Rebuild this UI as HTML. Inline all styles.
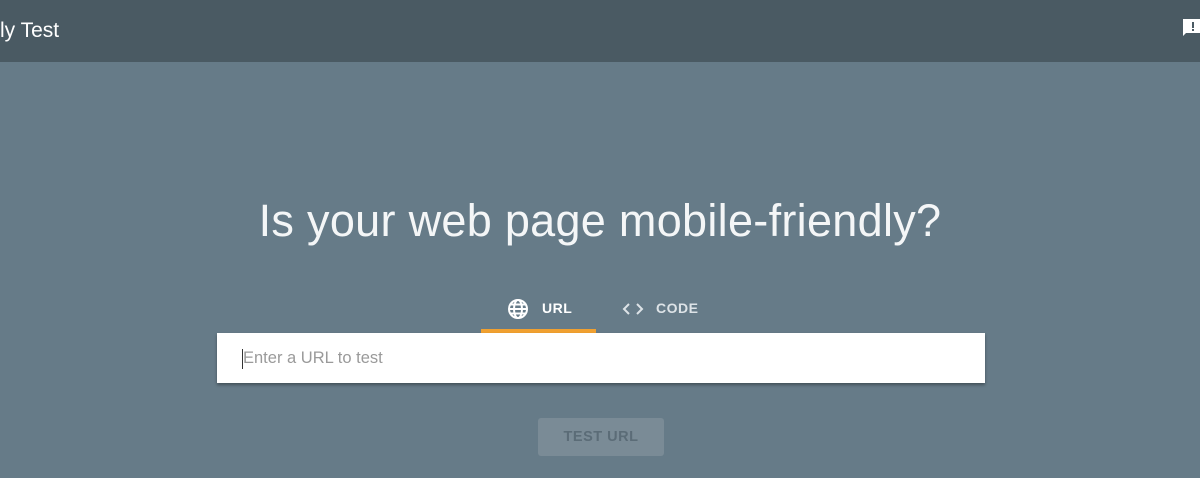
<!DOCTYPE html>
<html><head><meta charset="utf-8"><style>
html,body{margin:0;padding:0;width:1200px;height:478px;overflow:hidden;background:#667b88;font-family:"Liberation Sans",sans-serif;}
.hdr{position:absolute;left:0;top:0;width:1200px;height:62px;background:#4a5a63;}
.hdr .t{position:absolute;left:0;top:19px;font-size:21px;color:#fff;}
.fb{position:absolute;left:1183px;top:19px;width:20px;height:18px;}
h1{position:absolute;left:0;width:1200px;top:195px;margin:0;text-align:center;font-weight:normal;font-size:45px;color:#f4f6f7;letter-spacing:0.3px;}
.tab{position:absolute;top:300px;font-size:14px;font-weight:bold;letter-spacing:0.5px;}
.ul{position:absolute;left:481px;top:329px;width:115px;height:4px;background:#f0a030;}
.box{position:absolute;left:217px;top:333px;width:768px;height:50px;background:#fff;box-shadow:0 2px 3px rgba(0,0,0,.35);}
.box .ph{position:absolute;left:26px;top:16px;font-size:16.5px;color:#9a9a9a;}
.box .cur{position:absolute;left:25px;top:16px;width:1px;height:20px;background:#333;}
.btn{position:absolute;left:538px;top:418px;width:126px;height:38px;background:#7a8b96;border-radius:3px;color:#5b6c77;font-size:14.5px;font-weight:bold;text-align:center;line-height:38px;letter-spacing:0.5px;}
</style></head><body>
<div class="hdr"><div class="t">ly Test</div>
<svg class="fb" viewBox="0 0 20 18"><path d="M0 0H20V14H3L0 17Z" fill="#fff"/><rect x="9" y="3" width="2" height="6" fill="#4a5a63"/><rect x="9" y="10" width="2" height="2" fill="#4a5a63"/></svg></div>
<h1>Is your web page mobile-friendly?</h1>
<svg style="position:absolute;left:507px;top:298px" width="22" height="22" viewBox="0 0 22 22" fill="none" stroke="#fff" stroke-width="2"><circle cx="11" cy="11" r="9"/><ellipse cx="11" cy="11" rx="4" ry="9"/><path d="M2 11H20M3.5 6.5H18.5M3.5 15.5H18.5"/></svg>
<div class="tab" style="left:542px;color:#fff">URL</div>
<svg style="position:absolute;left:622px;top:301px" width="22" height="16" viewBox="0 0 22 16" fill="none" stroke="#dde3e7" stroke-width="2"><path d="M7 3L2 8L7 13M15 3L20 8L15 13"/></svg>
<div class="tab" style="left:656px;color:#dde3e7">CODE</div>
<div class="ul"></div>
<div class="box"><div class="cur"></div><div class="ph">Enter a URL to test</div></div>
<div class="btn">TEST URL</div>
</body></html>
